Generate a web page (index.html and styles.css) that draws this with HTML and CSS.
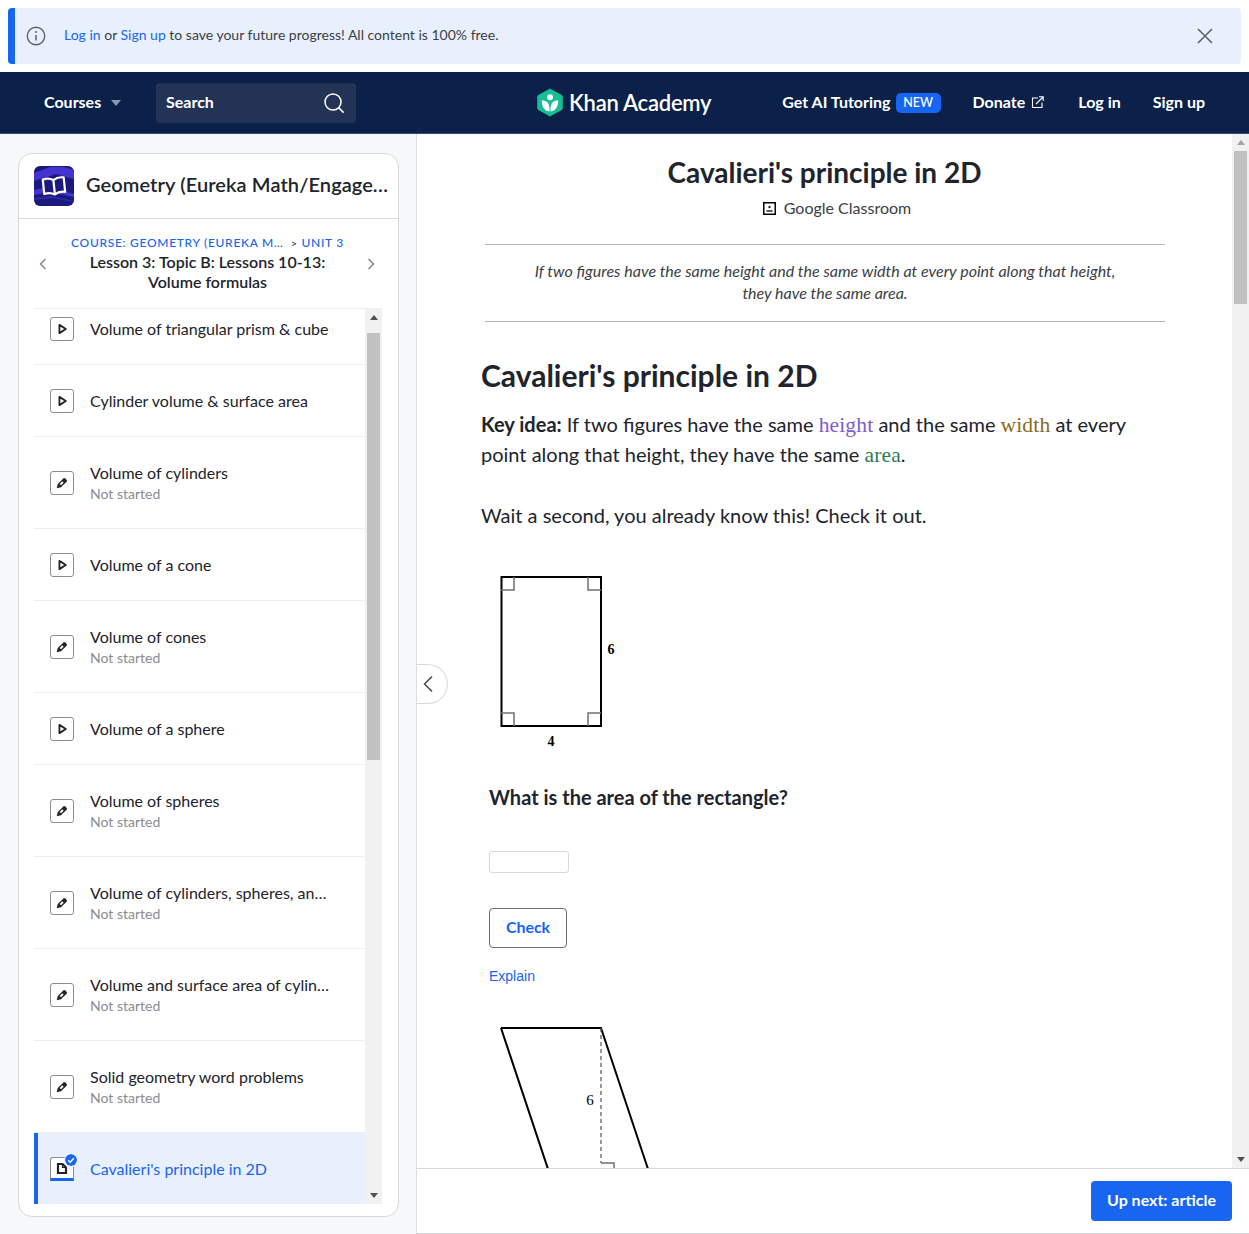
FILE: index.html
```html
<!DOCTYPE html>
<html lang="en">
<head>
<meta charset="utf-8">
<title>Cavalieri's principle in 2D</title>
<link rel="stylesheet" href="styles.css">
</head>
<body>
<svg class="defs" width="0" height="0" aria-hidden="true">
  <symbol id="play" viewBox="0 0 24 24"><path d="M9.2 7.5v9l7-4.5z" fill="none" stroke="#21242c" stroke-width="2" stroke-linejoin="round"/></symbol>
  <symbol id="pencil" viewBox="0 0 24 24"><path d="M6.300 17.700l1-4.600 6.200-6.100a1.500 1.500 0 0 1 2.100 0l1.400 1.400a1.500 1.500 0 0 1 0 2.100l-6.100 6.200z" fill="#21242c"/><path d="M10.200 13.800l2.800-2.800" stroke="#fff" stroke-width="2.200"/></symbol>
  <symbol id="chev-l" viewBox="0 0 16 16"><path d="M10.500 3L5.500 8l5 5" fill="none" stroke="#85878c" stroke-width="1.500"/></symbol>
  <symbol id="chev-r" viewBox="0 0 16 16"><path d="M5.500 3l5 5-5 5" fill="none" stroke="#85878c" stroke-width="1.500"/></symbol>
</svg>

<div class="banner">
  <svg class="banner-info" width="20" height="20" viewBox="0 0 20 20"><circle cx="10" cy="10" r="8.700" fill="none" stroke="#5f6167" stroke-width="1.400"/><path d="M10 9v5.500" stroke="#5f6167" stroke-width="1.500"/><circle cx="10" cy="6" r="1" fill="#5f6167"/></svg>
  <p class="banner-text"><a>Log in</a> or <a>Sign up</a> to save your future progress! All content is 100% free.</p>
  <svg class="banner-close" width="16" height="16" viewBox="0 0 16 16"><path d="M1 1l14 14M15 1L1 15" stroke="#5f6167" stroke-width="1.600"/></svg>
</div>

<header class="nav">
  <div class="courses">Courses<span class="caret"></span></div>
  <div class="search">
    <span>Search</span>
    <svg width="22" height="22" viewBox="0 0 22 22"><circle cx="10" cy="10" r="8" fill="none" stroke="#fff" stroke-width="1.500"/><path d="M15.600 15.600l5 5" stroke="#fff" stroke-width="1.500"/></svg>
  </div>
  <div class="logo">
    <svg width="28" height="29" viewBox="0 0 28 29"><path d="M14 0.500l11.600 6.400a2.400 2.400 0 0 1 1.200 2.100v11a2.400 2.400 0 0 1-1.200 2.100L14 28.500 2.400 22.100a2.400 2.400 0 0 1-1.200-2.100V9a2.400 2.400 0 0 1 1.200-2.100z" fill="#14bf96"/><circle cx="14" cy="9.300" r="3" fill="#fff"/><path d="M5.800 12.300c5 .2 7.700 3 7.700 8.800v2.400c-5-.5-7.700-4.300-7.700-11.200zM22.200 12.300c-5 .2-7.700 3-7.700 8.800v2.400c5-.5 7.700-4.300 7.700-11.200z" fill="#fff"/></svg>
    <span>Khan Academy</span>
  </div>
  <nav class="nav-links">
    <a class="tutor">Get AI Tutoring<span class="new">NEW</span></a>
    <a class="donate">Donate<svg width="13" height="13" viewBox="0 0 13 13"><path d="M7 2H1.500v9.500H11V6.500" fill="none" stroke="#fff" stroke-width="1.100"/><path d="M5 8l7-7M8 .8h4.200V5" fill="none" stroke="#fff" stroke-width="1.100"/></svg></a>
    <a>Log in</a>
    <a>Sign up</a>
  </nav>
</header>

<main class="main">
  <aside class="side">
    <section class="card">
      <div class="card-head">
        <svg class="course-icon" width="40" height="40" viewBox="0 0 40 40"><rect width="40" height="40" rx="6" fill="#1a1a7e"/><path d="M0 7L16 1h14l10 3v9L22 8 0 15zM0 24l14-3 26 7v3l-24-5-16 3z" fill="#4433cc"/><path d="M0 32l18-2 22 5v1l-22-4-18 2z" fill="#3328a8"/><g transform="rotate(-6 20 20)"><path d="M9.500 12.500c3.800-1 7.500-.5 10.500 1.500 3-2 6.700-2.500 10.500-1.500v14.500c-3.800-1-7.500-.5-10.500 1.500-3-2-6.700-2.500-10.500-1.500z" fill="#1a1a7e" stroke="#fff" stroke-width="2.200" stroke-linejoin="round"/><path d="M20 14v14" stroke="#fff" stroke-width="2.200"/></g></svg>
        <h2 class="course-title">Geometry (Eureka Math/EngageNY)</h2>
      </div>
      <div class="lesson-head">
        <svg class="lesson-chev" width="16" height="16"><use href="#chev-l"/></svg>
        <div class="lesson-mid">
          <div class="crumbs"><span class="crumb-course">Course: Geometry (Eureka Math/EngageNY)</span><span class="crumb-sep">&gt;</span><span>Unit 3</span></div>
          <div class="lesson-title">Lesson 3: Topic B: Lessons 10-13:<br>Volume formulas</div>
        </div>
        <svg class="lesson-chev" width="16" height="16"><use href="#chev-r"/></svg>
      </div>
      <div class="list-wrap">
        <ul class="list">
          <li class="row row-first"><svg class="ico" width="24" height="24"><use href="#play"/></svg><div class="row-text"><div class="row-name">Volume of triangular prism &amp; cube</div></div></li>
          <li class="row"><svg class="ico" width="24" height="24"><use href="#play"/></svg><div class="row-text"><div class="row-name">Cylinder volume &amp; surface area</div></div></li>
          <li class="row row-tall"><svg class="ico" width="24" height="24"><use href="#pencil"/></svg><div class="row-text"><div class="row-name">Volume of cylinders</div><div class="row-sub">Not started</div></div></li>
          <li class="row"><svg class="ico" width="24" height="24"><use href="#play"/></svg><div class="row-text"><div class="row-name">Volume of a cone</div></div></li>
          <li class="row row-tall"><svg class="ico" width="24" height="24"><use href="#pencil"/></svg><div class="row-text"><div class="row-name">Volume of cones</div><div class="row-sub">Not started</div></div></li>
          <li class="row"><svg class="ico" width="24" height="24"><use href="#play"/></svg><div class="row-text"><div class="row-name">Volume of a sphere</div></div></li>
          <li class="row row-tall"><svg class="ico" width="24" height="24"><use href="#pencil"/></svg><div class="row-text"><div class="row-name">Volume of spheres</div><div class="row-sub">Not started</div></div></li>
          <li class="row row-tall"><svg class="ico" width="24" height="24"><use href="#pencil"/></svg><div class="row-text"><div class="row-name">Volume of cylinders, spheres, and cones word problems</div><div class="row-sub">Not started</div></div></li>
          <li class="row row-tall"><svg class="ico" width="24" height="24"><use href="#pencil"/></svg><div class="row-text"><div class="row-name">Volume and surface area of cylinders and spheres</div><div class="row-sub">Not started</div></div></li>
          <li class="row row-tall"><svg class="ico" width="24" height="24"><use href="#pencil"/></svg><div class="row-text"><div class="row-name">Solid geometry word problems</div><div class="row-sub">Not started</div></div></li>
          <li class="row row-active">
            <span class="active-ico">
              <svg class="ico-plain" width="24" height="24" viewBox="0 0 24 24"><path d="M8 7h4.500l3.500 3.500V16H8z" fill="#fff" stroke="#21242c" stroke-width="2.200"/><path d="M12.500 6v4.500H17" fill="none" stroke="#21242c" stroke-width="1.200"/></svg>
              <svg class="check" width="12" height="12" viewBox="0 0 12 12"><circle cx="6" cy="6" r="6" fill="#1865f2"/><path d="M3.200 6.200l2 2 3.600-4" fill="none" stroke="#fff" stroke-width="1.500"/></svg>
            </span>
            <div class="row-text"><div class="row-name">Cavalieri's principle in 2D</div></div>
          </li>
        </ul>
        <div class="sbar sbar-side"><i class="arrow-up"></i><b class="thumb"></b><i class="arrow-down"></i></div>
      </div>
    </section>
  </aside>

  <section class="content">
    <button class="collapse" aria-label="Collapse"><svg width="12" height="18" viewBox="0 0 12 18"><path d="M10 1.500L2.500 9l7.500 7.500" fill="none" stroke="#44464c" stroke-width="1.500"/></svg></button>
    <div class="scroller">
      <article class="article">
        <header class="art-head">
          <h1>Cavalieri's principle in 2D</h1>
          <div class="classroom"><svg width="13" height="13" viewBox="0 0 13 13"><rect x=".75" y=".75" width="11.500" height="11.500" fill="#fff" stroke="#000" stroke-width="1.500"/><circle cx="6.500" cy="5" r="1.200" fill="#21242c"/><path d="M3.500 9h6" stroke="#21242c" stroke-width="1.500"/></svg><span>Google Classroom</span></div>
        </header>
        <p class="intro">If two figures have the same height and the same width at every point along that height,<br>they have the same area.</p>
        <div class="body">
          <h2>Cavalieri's principle in 2D</h2>
          <p class="key"><strong>Key idea:</strong> If two figures have the same <span class="m-h">height</span> and the same <span class="m-w">width</span> at every point along that height, they have the same <span class="m-a">area</span>.</p>
          <p class="wait">Wait a second, you already know this! Check it out.</p>
          <svg class="fig1" width="140" height="188" viewBox="0 0 140 188">
            <rect x="21.500" y="2" width="99.500" height="149" fill="none" stroke="#000" stroke-width="2"/>
            <path d="M21 15h13V2M121 15h-13V2M21 138h13v13M121 138h-13v13" fill="none" stroke="#707070" stroke-width="1.500"/>
            <text class="fig-num" x="131" y="79" text-anchor="middle">6</text>
            <text class="fig-num" x="71" y="171" text-anchor="middle">4</text>
          </svg>
          <div class="question">
            <h3>What is the area of the rectangle?</h3>
            <div class="answer"></div>
            <button class="check-btn">Check</button>
            <a class="explain">Explain</a>
          </div>
          <svg class="fig2" width="180" height="150" viewBox="0 0 180 150">
            <path d="M21 2h100l70 210M21 2l70 210" fill="none" stroke="#000" stroke-width="2"/>
            <path d="M121 2v135" fill="none" stroke="#555" stroke-width="1.200" stroke-dasharray="4 3"/>
            <path d="M121 137h13v6" fill="none" stroke="#707070" stroke-width="1.500"/>
            <text class="fig-num fig-num-plain" x="110" y="79" text-anchor="middle">6</text>
          </svg>
        </div>
      </article>
      <div class="sbar sbar-main"><i class="arrow-up"></i><b class="thumb"></b><i class="arrow-down"></i></div>
    </div>
    <footer class="foot"><button class="next">Up next: article</button></footer>
  </section>
</main>
</body>
</html>
```
FILE: styles.css
```css
* { box-sizing: border-box; }
html, body { margin: 0; height: 1234px; overflow: hidden; }
body { background: #fff; font-family: Lato, "Liberation Sans", sans-serif; color: #21242c; }
.defs { position: absolute; }
p, h1, h2, h3, ul { margin: 0; padding: 0; }
a { color: inherit; text-decoration: none; }
button { font-family: inherit; }

.banner { margin: 8px 8px 8px; height: 56px; background: #e9f0fd; border-left: 7px solid #1865f2; border-radius: 4px; display: flex; align-items: center; padding: 0 28px 0 11px; }
.banner-info { flex: none; }
.banner-text { margin-left: 18px; font-size: 14px; flex: 1; color: #3b3e45; margin-top: -4px; }
.banner-text a { color: #1865f2; }

.nav { height: 62px; background: #0c2149; border-bottom: 1px solid #3b4c6e; display: flex; align-items: center; color: #fff; font-weight: 700; font-size: 16px; padding-left: 44px; padding-right: 44px; }
.courses { display: flex; align-items: center; width: 112px; margin-top: -2px; }
.caret { border: 5.500px solid transparent; border-top: 6px solid #8d97ab; border-bottom: 0; margin-left: 10px; margin-top: 2px; }
.search { width: 200px; height: 40px; background: #223356; border-radius: 4px; display: flex; align-items: center; justify-content: space-between; padding: 0 11px 0 10px; }
.search span { margin-top: -2px; }
.logo { margin-left: 180px; display: flex; align-items: center; gap: 5px; font-size: 22px; font-weight: 600; letter-spacing: -0.25px; }
.nav-links { margin-left: auto; display: flex; align-items: center; gap: 32px; margin-top: -2px; }
.tutor { display: flex; align-items: center; }
.new { background: #1865f2; border-radius: 5px; font-size: 12.500px; font-weight: 500; width: 45px; text-align: center; height: 20px; line-height: 20px; margin-left: 5px; margin-top: 2px; }
.donate { display: flex; align-items: center; gap: 6px; margin-right: 2px; }
.donate svg { margin-top: 2px; }

.main { display: flex; height: 1100px; }
.side { width: 417px; flex: none; background: #f7f8fa; padding: 19px 17px 17px 18px; border-right: 1px solid #dcdddf; }
.card { height: 1064px; background: #fff; border: 1px solid #d8d9db; border-radius: 14px; display: flex; flex-direction: column; overflow: hidden; }
.card-head { height: 65px; flex: none; border-bottom: 1px solid #d8d9db; display: flex; align-items: center; padding: 0 9px 1px 15px; gap: 12px; }
.course-icon { flex: none; }
.course-title { font-size: 20px; font-weight: 600; letter-spacing: 0.1px; white-space: nowrap; overflow: hidden; text-overflow: ellipsis; min-width: 0; margin-top: -3px; }
.lesson-head { height: 89px; flex: none; display: flex; align-items: center; padding: 0 19px 0 16px; }
.lesson-chev { flex: none; }
.lesson-mid { flex: 1; text-align: center; min-width: 0; padding-left: 1px; margin-top: -1px; }
.crumbs { display: flex; justify-content: center; align-items: center; color: #1865f2; font-size: 12px; line-height: 16px; text-transform: uppercase; letter-spacing: 0.7px; font-weight: 500; }
.crumb-course { max-width: 212px; white-space: nowrap; overflow: hidden; text-overflow: ellipsis; }
.crumb-sep { color: #21242c; margin: 0 4px 0 8px; font-size: 10px; }
.lesson-title { font-size: 16px; font-weight: 600; line-height: 20px; margin-top: 1px; color: #21242c; }

.list-wrap { flex: 1; min-height: 0; display: flex; margin: 0 16px 12px 15px; border-top: 1px solid #eeeeef; }
.list { flex: 1; list-style: none; overflow: hidden; min-width: 0; }
.row { height: 72px; border-bottom: 1px solid #eeeeef; display: flex; align-items: center; padding: 0 33px 0 16px; gap: 16px; }
.row-first { height: 72px; margin-top: -16px; }
.row-tall { height: 92px; }
.row-tall .row-text { padding-top: 2px; }
.ico { flex: none; border: 1px solid #8b8d91; border-radius: 3px; background: #fff; }
.row-text { min-width: 0; flex: 1; }
.row-name { font-size: 16px; line-height: 20px; white-space: nowrap; overflow: hidden; text-overflow: ellipsis; }
.row-sub { font-size: 14px; line-height: 20px; margin-top: 1px; color: #8a8c91; }
.row-active { background: #e9f0fd; border-left: 4px solid #1865f2; border-bottom: 0; padding-left: 12px; }
.row-active .row-name { color: #1865f2; }
.active-ico { position: relative; flex: none; border: 1px solid #8b8d91; border-bottom: 3px solid #1865f2; border-radius: 3px 3px 0 0; background: #fff; box-sizing: content-box; margin: 0; width: 22px; height: 20px; }
.ico-plain { position: absolute; left: -1px; top: -1px; }
.check { position: absolute; right: -4px; top: -4px; box-shadow: 0 0 0 1px #e9f0fd; border-radius: 50%; }

.sbar { flex: none; width: 17px; background: #f1f1f1; display: flex; flex-direction: column; align-items: stretch; position: relative; }
.thumb { display: block; background: #c1c1c1; margin: 0 2px; }
.sbar-side .thumb { margin-top: 24px; height: 427px; }
.sbar-main .thumb { margin-top: 17px; height: 153px; }
.arrow-up, .arrow-down { position: absolute; left: 5px; width: 0; height: 0; border: 4px solid transparent; }
.arrow-up { top: 6px; border-top: 0; border-bottom: 5px solid #505050; }
.arrow-down { bottom: 6px; border-bottom: 0; border-top: 5px solid #505050; }
.sbar-main .arrow-up { border-bottom-color: #a3a3a3; }

.content { flex: 1; min-width: 0; display: flex; flex-direction: column; position: relative; background: #fff; }
.collapse { position: absolute; left: 0; top: 530px; width: 31px; height: 40px; background: #fff; border: 1px solid #d8d9db; border-left: 0; border-radius: 0 20px 20px 0; padding: 0 0 0 5px; display: flex; align-items: center; z-index: 2; }
.scroller { flex: 1; min-height: 0; display: flex; overflow: hidden; }
.article { flex: 1; min-width: 0; overflow: hidden; }
.art-head { text-align: center; padding-top: 21px; height: 110px; }
h1 { font-size: 28px; line-height: 34px; font-weight: 700; }
.classroom { display: flex; justify-content: center; align-items: center; gap: 8px; margin-top: 8px; padding-left: 25px; font-size: 16px; line-height: 22px; color: #3b3e45; }
.intro { margin: 0 67px 0 68px; height: 78px; border-top: 1px solid #b5b6b9; border-bottom: 1px solid #b5b6b9; text-align: center; font-style: italic; font-size: 16px; line-height: 22px; padding-top: 15px; color: #3b3e45; }
.body { padding: 0 64px 0 64px; }
.body h2 { font-size: 30px; font-weight: 700; line-height: 38px; margin-top: 34px; }
.key { font-size: 20px; line-height: 30px; margin-top: 15px; color: #21242c; }
.key strong { font-weight: 700; }
.m-h, .m-w, .m-a { font-family: "Liberation Serif", serif; font-size: 21.500px; line-height: 0; letter-spacing: 0.15px; }
.m-h { color: #7a5cd6; }
.m-w { color: #8a6a1c; }
.m-a { color: #2a7d52; }
.wait { font-size: 20px; line-height: 30px; margin-top: 31px; }
.fig1 { display: block; margin: 45px 0 0 -1px; }
.fig-num { font-family: "Liberation Serif", serif; font-size: 14px; font-weight: 700; fill: #000; }
.fig-num-plain { font-size: 15px; font-weight: 400; }
.question { padding-left: 8px; }
h3 { font-size: 20px; font-weight: 700; line-height: 28px; margin-top: 20px; }
.answer { width: 80px; height: 22px; border: 1px solid #d8d9db; border-radius: 3px; margin-top: 40px; }
.check-btn { display: block; width: 78px; height: 40px; margin-top: 35px; padding: 0 0 3px; background: #fff; border: 1px solid #6b6d73; border-radius: 4px; color: #1865f2; font-size: 16px; font-weight: 700; letter-spacing: -0.1px; }
.explain { display: block; margin-top: 19px; font-family: "Liberation Sans", sans-serif; font-size: 14px; line-height: 18px; color: #1865f2; }
.fig2 { display: block; margin: 41px 0 0 -1px; overflow: hidden; }
.foot { height: 66px; flex: none; border-top: 1px solid #d8d9db; border-bottom: 1px solid #d8d9db; display: flex; align-items: flex-start; justify-content: flex-end; padding: 12px 17px 0 0; background: #fff; }
.next { width: 141px; height: 40px; padding: 0 0 4px; background: #1865f2; border: 0; border-radius: 4px; color: #fff; font-size: 16px; font-weight: 700; }
```
